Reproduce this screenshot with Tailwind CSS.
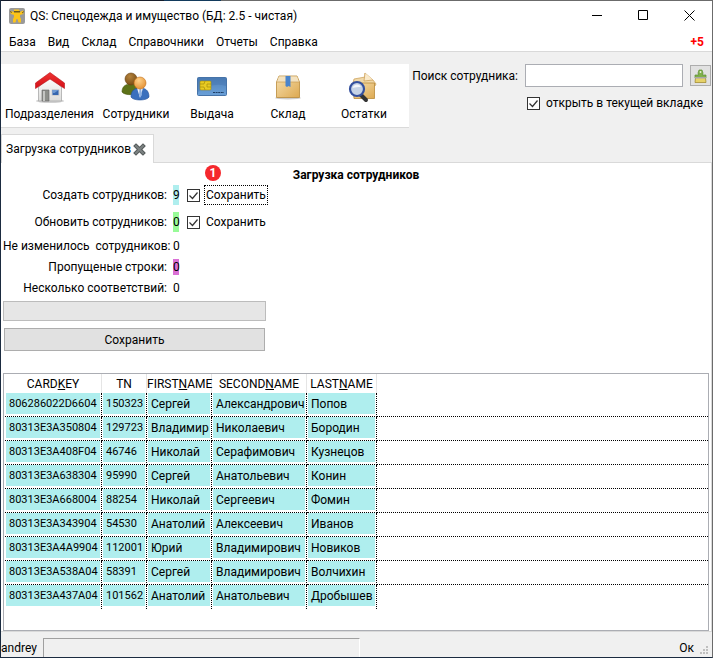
<!DOCTYPE html>
<html lang="ru">
<head>
    <meta charset="UTF-8">
    <meta name="viewport" content="width=device-width, initial-scale=1.0">
    <title>QS: Спецодежда и имущество</title>
    <script src="https://cdn.jsdelivr.net/npm/@tailwindcss/browser@4"></script>
</head>
<body class="flex flex-col min-h-screen bg-[#f0f0f0] border-l border-r border-b border-l-[#1b2b40] border-r-[#6b6b6b] border-b-[#1b2b40] font-[Roboto,'Noto_Sans',sans-serif] text-[12px] leading-4 text-black">
    <!-- window edge -->
    <div class="flex h-px">
        <div class="w-[163px] bg-[#141c2b]"></div>
        <div class="w-[57px] bg-[#123a5c]"></div>
        <div class="flex-1 bg-[#6b6b6b]"></div>
    </div>

    <!-- title bar -->
    <header class="flex items-center h-[29px] bg-white pl-2">
        <svg class="w-4 h-4 mr-[5px]" viewBox="0 0 16 16">
            <rect width="16" height="16" rx="2" fill="#9a9a9a"/>
            <path d="M5 1.500h5l1 2.500 3-1.500 1 1.500-1 2-3 1v2l1 2v3.500H9.500L8.500 11h-1l-1 3.500H4V11l1-2V7L2 6 1 4l1-1 3 1z" fill="#fcc419"/>
            <path d="M5 3h6v1.500H5z" fill="#6d5a1e"/>
            <path d="M1 3.500l2 1M15 3.500l-2 1.500" stroke="#444" stroke-width=".8"/>
        </svg>
        <span class="flex-1">QS: Спецодежда и имущество (БД: 2.5 - чистая)</span>
        <div class="flex">
            <button class="w-[46px] h-7 grid place-items-center" aria-label="Свернуть">
                <svg class="w-[11px] h-[11px]" viewBox="0 0 11 11"><path d="M0 5.500h10" stroke="#000"/></svg>
            </button>
            <button class="w-[46px] h-7 grid place-items-center" aria-label="Развернуть">
                <svg class="w-[11px] h-[11px]" viewBox="0 0 11 11"><path d="M.5.500h9v9h-9z" fill="none" stroke="#000"/></svg>
            </button>
            <button class="w-[46px] h-7 grid place-items-center" aria-label="Закрыть">
                <svg class="w-[11px] h-[11px]" viewBox="0 0 11 11"><path d="M.5.500l10 10M10.500.500l-10 10" stroke="#000"/></svg>
            </button>
        </div>
    </header>

    <!-- menu -->
    <nav class="flex items-center h-[22px] bg-white border-b border-[#d9d9d9] pl-2 pr-2 pt-[3px] gap-3">
        <a href="#">База</a>
        <a href="#">Вид</a>
        <a href="#">Склад</a>
        <a href="#">Справочники</a>
        <a href="#">Отчеты</a>
        <a href="#">Справка</a>
        <span class="ml-auto font-bold text-[#ff0000]">+5</span>
    </nav>

    <!-- toolbar and search -->
    <div class="flex justify-between items-start pt-3">
        <div class="flex h-16 bg-white border-b border-[#dadada] pr-[7px]">
            <button class="w-[97px] flex flex-col items-center pt-2 gap-[2px]">
                <svg class="w-8 h-8" viewBox="0 0 32 32">
                    <defs>
                        <linearGradient id="roof" x1="0" y1="0" x2="0" y2="1"><stop offset="0" stop-color="#e33"/><stop offset="1" stop-color="#d40f17"/></linearGradient>
                        <linearGradient id="wall" x1="0" y1="0" x2="0" y2="1"><stop offset="0" stop-color="#fff"/><stop offset="1" stop-color="#dcdcda"/></linearGradient>
                    </defs>
                    <ellipse cx="16" cy="29" rx="14" ry="2" fill="#000" opacity=".18"/>
                    <path d="M4.500 15L16 5l11.500 10v14h-23z" fill="url(#wall)" stroke="#aaa" stroke-width=".8"/>
                    <path d="M16 .5L1.500 11v5.500L16 7l14.500 9.500V11z" fill="url(#roof)" stroke="#b8141a" stroke-width=".6" stroke-linejoin="round"/>
                    <path d="M8 18h7v11H8z" fill="#8d8f8a" stroke="#666" stroke-width=".6"/>
                    <path d="M9 19h2v10H9z" fill="#c4c5c2"/>
                    <path d="M18 17.500h7v6h-7z" fill="#3667b0" stroke="#d0d0d0"/>
                    <path d="M18.500 18h6l-4 3h-2z" fill="#6f9ad3"/>
                </svg>
                <span>Подразделения</span>
            </button>
            <button class="w-[76px] flex flex-col items-center pt-2 gap-[2px]">
                <svg class="w-8 h-8" viewBox="0 0 32 32">
                    <defs>
                        <radialGradient id="face" cx=".4" cy=".3" r=".8"><stop offset="0" stop-color="#ffd28a"/><stop offset="1" stop-color="#e08a2c"/></radialGradient>
                        <radialGradient id="face2" cx=".4" cy=".3" r=".8"><stop offset="0" stop-color="#b5833c"/><stop offset="1" stop-color="#734710"/></radialGradient>
                    </defs>
                    <path d="M2 20c0-6 4-8 9-8s8 3 8 8c-2 3-14 4-17 0z" fill="#5d7218" stroke="#435309" stroke-width=".6"/>
                    <circle cx="11" cy="7" r="6" fill="url(#face2)" stroke="#6a4210" stroke-width=".6"/>
                    <path d="M11 25c0-7 4-9 9-9s9 2 9 9c-2 4-16 4-18 0z" fill="#3a70bd" stroke="#24539b" stroke-width=".6"/>
                    <path d="M17 16l3 10 3-10z" fill="#eef2fa"/>
                    <path d="M19.500 17h1.500l1 6-1.500 2-1.500-2z" fill="#8cb0e0"/>
                    <circle cx="20" cy="11" r="6" fill="url(#face)" stroke="#c56f16" stroke-width=".6"/>
                </svg>
                <span>Сотрудники</span>
            </button>
            <button class="w-[76px] flex flex-col items-center pt-2 gap-[2px]">
                <svg class="w-8 h-8" viewBox="0 0 32 32">
                    <defs>
                        <linearGradient id="card" x1="0" y1="0" x2="0" y2="1"><stop offset="0" stop-color="#4e80b8"/><stop offset="1" stop-color="#6aa0d8"/></linearGradient>
                    </defs>
                    <rect x="1.500" y="5.500" width="29" height="18" rx="1" fill="url(#card)" stroke="#4673a8"/>
                    <path d="M2 20Q16 10 30 14v-8L2 6z" fill="#3e6ea8" opacity=".35"/>
                    <rect x="4" y="9" width="11" height="9" rx="1" fill="#e8cb22" stroke="#a78d0b" stroke-width=".6"/>
                    <path d="M4 12h4l1-3M4 15h4l1 3M15 12h-4v3h4" fill="none" stroke="#a78d0b" stroke-width=".7"/>
                    <path d="M17 20.500h11" stroke="#1f3f66" stroke-dasharray="2 .6"/>
                </svg>
                <span>Выдача</span>
            </button>
            <button class="w-[76px] flex flex-col items-center pt-2 gap-[2px]">
                <svg class="w-8 h-8" viewBox="0 0 32 32">
                    <defs>
                        <linearGradient id="box" x1="0" y1="0" x2="1" y2="1"><stop offset="0" stop-color="#f6dfae"/><stop offset="1" stop-color="#dda951"/></linearGradient>
                    </defs>
                    <ellipse cx="16" cy="26" rx="13" ry="1.500" fill="#000" opacity=".2"/>
                    <path d="M7 4h18l2.500 6v15.500h-23V10z" fill="url(#box)" stroke="#b98a3a" stroke-width=".8"/>
                    <path d="M7 4.500h18l2 5.500H5z" fill="#f3e2c0"/>
                    <path d="M5 10h22" stroke="#c99b50" stroke-width=".7"/>
                    <path d="M13.500 4h5v11l-2-1-1.500 1-1.500-1z" fill="#4a84cb"/>
                </svg>
                <span>Склад</span>
            </button>
            <button class="w-[76px] flex flex-col items-center pt-2 gap-[2px]">
                <svg class="w-8 h-8" viewBox="0 0 32 32">
                    <path d="M5 11l1-4 11-2v-4l8 7 3 4-1 2H6z" fill="#f0d8a8" stroke="#c99b50" stroke-width=".7"/>
                    <path d="M17 1l-1 8 9-1" fill="#fae9c8" stroke="#c99b50" stroke-width=".7"/>
                    <path d="M5 11h21.500v15.500H6z" fill="url(#box)" stroke="#b98a3a" stroke-width=".8"/>
                    <path d="M13 23l5 5" stroke="#333" stroke-width="4" stroke-linecap="round"/>
                    <circle cx="9" cy="17" r="7" fill="#c6d3e6" stroke="#34509e" stroke-width="2.200"/>
                    <path d="M4.500 16c1-4 6.500-5 8.500-1-3 0-5 0-8.500 1z" fill="#fff" opacity=".8"/>
                </svg>
                <span>Остатки</span>
            </button>
        </div>
        <div class="grid grid-cols-[auto_158px_21px] gap-x-[7px] items-center pr-px">
            <label for="search" class="whitespace-nowrap">Поиск сотрудника:</label>
            <input id="search" type="text" class="h-[23px] w-full bg-white border border-[#abadb3] px-1 outline-none">
            <button class="w-[21px] h-[21px] grid place-items-center bg-[#e1e1e1] border border-[#adadad]" aria-label="Очистить">
                <svg class="w-[13px] h-[14px]" viewBox="0 0 13 14">
                    <path d="M5 1h3l1 3-.5 2H12v3H1V6h3.500L4 4z" fill="#7fb04a" stroke="#5f8f34" stroke-width=".7"/>
                    <path d="M1.500 8.500h10l.5 5H1z" fill="#e6d268" stroke="#9c8426" stroke-width=".7"/>
                    <path d="M1 8h11v1.500H1z" fill="#a8a8a8"/>
                    <circle cx="6.500" cy="3" r=".9" fill="#e9f3dc"/>
                </svg>
            </button>
            <label class="col-start-2 col-span-2 flex items-center mt-2 ml-[2px] whitespace-nowrap">
                <span class="grid mr-[6px]">
                    <input type="checkbox" checked class="peer [grid-area:1/1] appearance-none w-[13px] h-[13px] bg-white border border-[#333]">
                    <svg class="[grid-area:1/1] w-[13px] h-[13px] pointer-events-none hidden peer-checked:block" viewBox="0 0 13 13"><path d="M2.500 6.500l3 3 5-6" fill="none" stroke="#333" stroke-width="1.200"/></svg>
                </span>
                открыть в текущей вкладке
            </label>
        </div>
    </div>

    <!-- tabs -->
    <div class="flex pt-[6px]">
        <div class="flex items-center h-[29px] bg-white border border-b-0 border-[#d9d9d9] pl-1 pr-[6px]">
            <span>Загрузка сотрудников</span>
            <button class="w-4 h-4 grid place-items-center" aria-label="Закрыть вкладку">
                <svg class="w-[13px] h-[13px]" viewBox="0 0 13 13"><path d="M3 3l7 7M10 3l-7 7" stroke="#555b5b" stroke-width="4" stroke-linecap="square"/><path d="M3 3l7 7M10 3l-7 7" stroke="#7c8282" stroke-width="2" stroke-linecap="square"/></svg>
            </button>
        </div>
        <div class="flex-1 border-b border-[#d9d9d9]"></div>
    </div>

    <main class="flex-1 flex flex-col bg-white border-b border-r border-[#d9d9d9] pl-[2px] pr-[2px] pt-1">
        <h1 class="text-center font-bold mb-[2px]">Загрузка сотрудников</h1>

        <div class="grid grid-cols-[164px_6px_auto] gap-x-[6px] w-fit items-center">
            <span class="text-right whitespace-pre">Создать сотрудников:</span>
            <span class="h-5 leading-5 bg-[#afeeee]">9</span>
            <label class="relative flex items-center h-5 ml-[2px]">
                <span class="grid mr-1">
                    <input type="checkbox" checked class="peer [grid-area:1/1] appearance-none w-[13px] h-[13px] bg-white border border-[#333]">
                    <svg class="[grid-area:1/1] w-[13px] h-[13px] pointer-events-none hidden peer-checked:block" viewBox="0 0 13 13"><path d="M2.500 6.500l3 3 5-6" fill="none" stroke="#333" stroke-width="1.200"/></svg>
                </span>
                <span class="border border-dotted border-black px-px leading-[18px]">Сохранить</span>
                <span class="absolute left-[18px] -top-5 w-4 h-4 rounded-full bg-[#f5282d] text-white font-bold text-center">1</span>
            </label>

            <span class="text-right whitespace-pre mt-[7px]">Обновить сотрудников:</span>
            <span class="h-5 leading-5 bg-[#98fb98] mt-[7px]">0</span>
            <label class="flex items-center h-5 ml-[2px] mt-[7px]">
                <span class="grid mr-1">
                    <input type="checkbox" checked class="peer [grid-area:1/1] appearance-none w-[13px] h-[13px] bg-white border border-[#333]">
                    <svg class="[grid-area:1/1] w-[13px] h-[13px] pointer-events-none hidden peer-checked:block" viewBox="0 0 13 13"><path d="M2.500 6.500l3 3 5-6" fill="none" stroke="#333" stroke-width="1.200"/></svg>
                </span>
                <span class="px-[2px]">Сохранить</span>
            </label>

            <span class="text-right whitespace-pre mt-[6px]">Не изменилось  сотрудников:</span>
            <span class="mt-[6px]">0</span>
            <span></span>

            <span class="text-right whitespace-pre mt-[5px]">Пропущеные строки:</span>
            <span class="bg-[#da70d6] mt-[5px]">0</span>
            <span></span>

            <span class="text-right whitespace-pre mt-[5px]">Несколько соответствий:</span>
            <span class="mt-[5px]">0</span>
            <span></span>
        </div>

        <div class="w-[263px] h-5 mt-[5px] bg-[#e6e6e6] border border-[#bcbcbc]" role="progressbar" aria-label="Загрузка"></div>
        <button class="w-[261px] h-[23px] mt-[7px] ml-px bg-[#e1e1e1] border border-[#adadad]">Сохранить</button>

        <div class="flex-1 mt-[22px] border border-[#abadb3] pl-px">
            <table class="w-full table-fixed border-separate border-spacing-0">
                <colgroup>
                    <col class="w-[97px]"><col class="w-[45px]"><col class="w-[65px]"><col class="w-[95px]"><col class="w-[70px]"><col>
                </colgroup>
                <thead>
                    <tr class="h-[19px] *:border-r *:border-[#e5e5e5] *:font-normal *:p-0 *:whitespace-nowrap *:last:border-r-0">
                        <th>CARD<u>K</u>EY</th>
                        <th>TN</th>
                        <th>FIRST<u>N</u>AME</th>
                        <th>SECOND<u>N</u>AME</th>
                        <th>LAST<u>N</u>AME</th>
                        <th></th>
                    </tr>
                </thead>
                <tbody id="rows"></tbody>
            </table>
        </div>
    </main>

    <!-- status bar -->
    <footer class="flex items-end h-[25px]">
        <span class="w-[42px] pb-px">andrey</span>
        <div class="w-[317px] h-[19px] border-t border-l border-r border-t-[#a0a0a0] border-l-[#a0a0a0] border-r-white"></div>
        <span class="ml-auto mr-[6px] pb-px">Ок</span>
        <svg class="w-[10px] h-[10px] mb-px mr-[2px]" viewBox="0 0 10 10" fill="#bfbfbf">
            <path d="M6 0h2v2H6zM3 3h2v2H3zM6 3h2v2H6zM0 6h2v2H0zM3 6h2v2H3zM6 6h2v2H6z"/>
        </svg>
    </footer>

    <script>
        const people = [
            ["806286022D6604", "150323", "Сергей", "Александрович", "Попов"],
            ["80313E3A350804", "129723", "Владимир", "Николаевич", "Бородин"],
            ["80313E3A408F04", "46746", "Николай", "Серафимович", "Кузнецов"],
            ["80313E3A638304", "95990", "Сергей", "Анатольевич", "Конин"],
            ["80313E3A668004", "88254", "Николай", "Сергеевич", "Фомин"],
            ["80313E3A343904", "54530", "Анатолий", "Алексеевич", "Иванов"],
            ["80313E3A4A9904", "112001", "Юрий", "Владимирович", "Новиков"],
            ["80313E3A538A04", "58391", "Сергей", "Владимирович", "Волчихин"],
            ["80313E3A437A04", "101562", "Анатолий", "Анатольевич", "Дробышев"],
        ];

        const rows = document.getElementById("rows");
        people.forEach((person, i) => {
            const line = i < people.length - 1 ? "border-b" : "";
            const cells = person.map((text, col) => {
                // key and number columns are set smaller so the codes fit
                const size = col < 2 ? "text-[11px]" : "";
                return `<td class="h-6 p-0 pl-px pr-px align-top border-r ${line} border-dotted border-black whitespace-nowrap"><div class="h-[21px] ${size} leading-[22px] pl-[3px] bg-[#afeeee]">${text}</div></td>`;
            }).join("");
            rows.innerHTML += `<tr>${cells}<td class="${line} border-dotted border-black"></td></tr>`;
        });
    </script>
</body>
</html>
